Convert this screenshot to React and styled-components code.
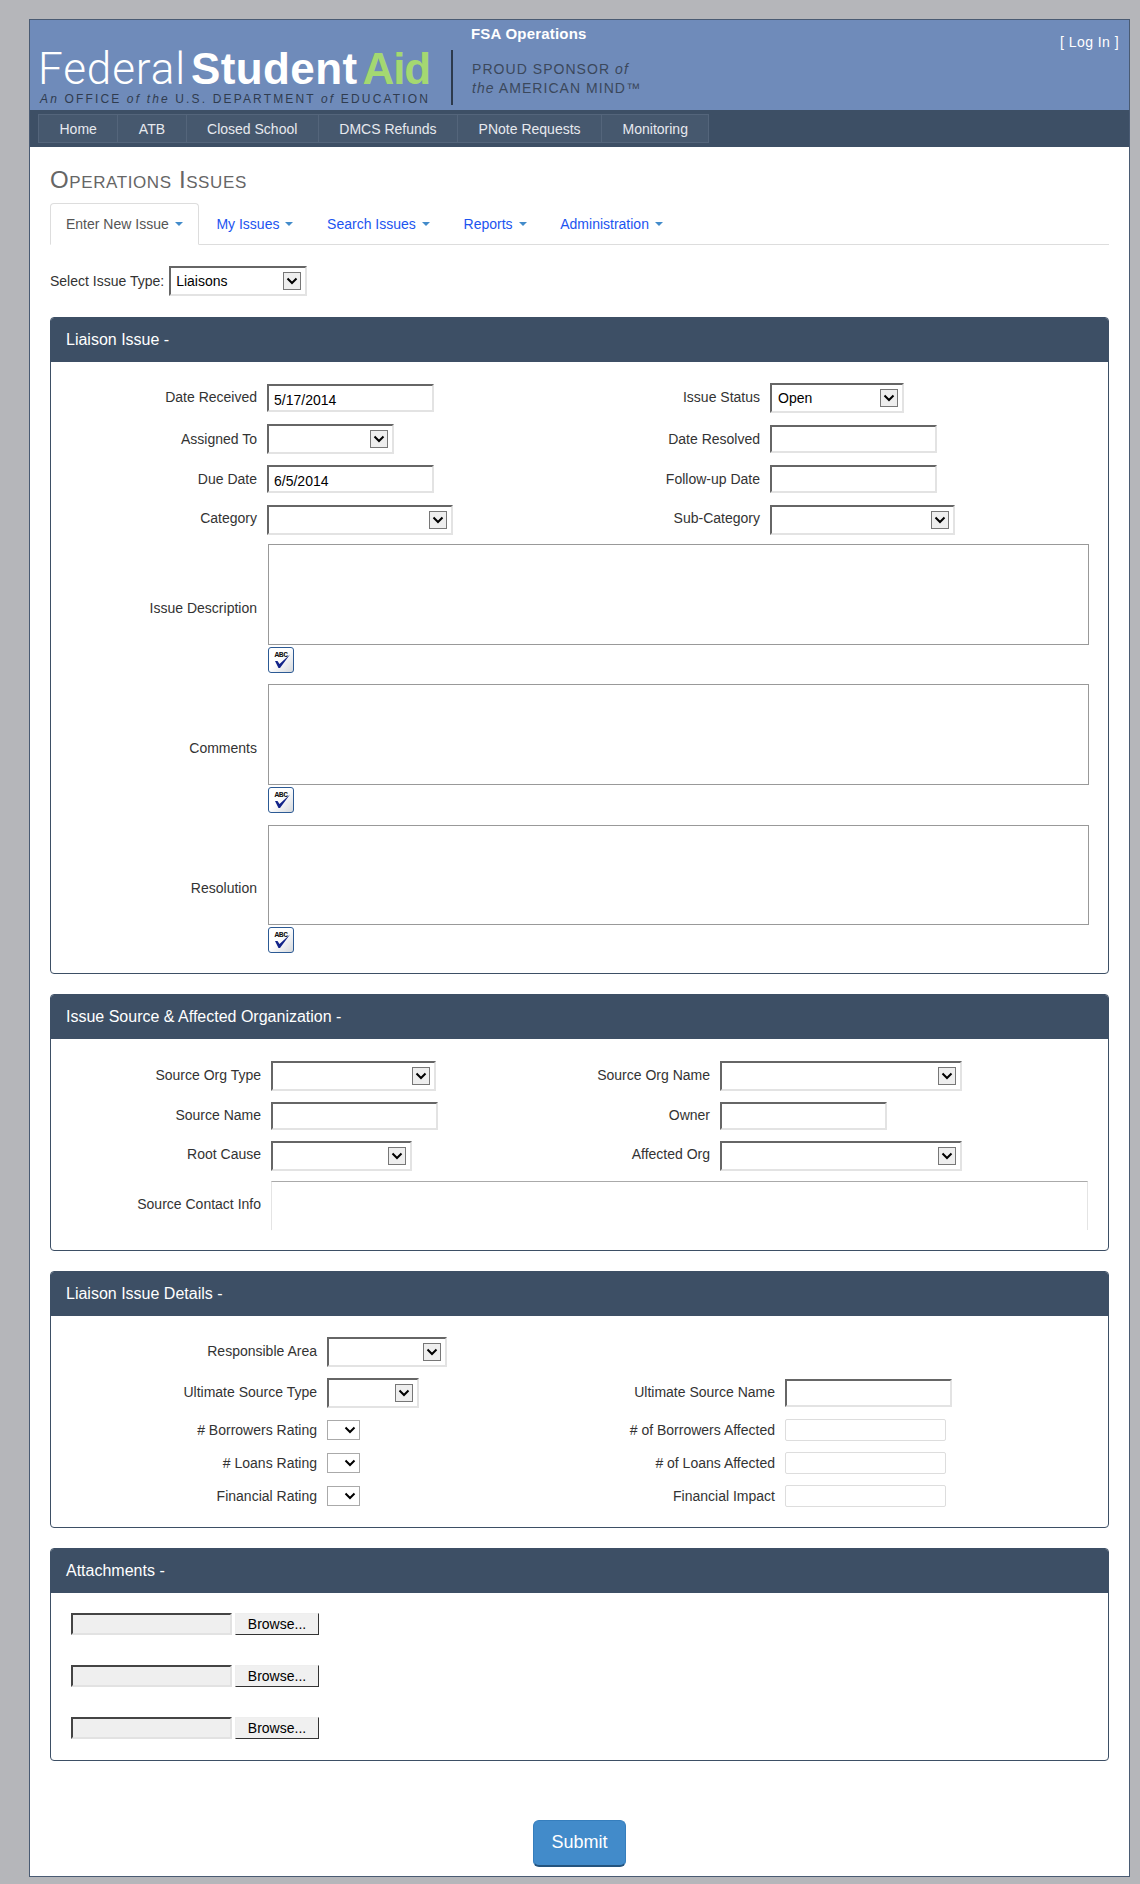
import React from "react";
import styled, { createGlobalStyle } from "styled-components";

const Global = createGlobalStyle`
  * { box-sizing: border-box; }
  html, body { margin: 0; padding: 0; }
  body {
    background: #b5b6ba;
    color: #333;
    font-family: "Liberation Sans", Arial, sans-serif;
    font-size: 14px;
    padding: 19px 0 8px 29px;
  }
`;

// ===================== Page chrome =====================
const Page = styled.div`
  width: 1101px;
  background: #fff;
  border: 1px solid #4a5b73;
`;
const Header = styled.header`
  height: 90px;
  background: #6f8bba;
  display: flex;
  padding-left: 8px;
`;
const Logo = styled.div`
  width: 413px;
  padding-top: 24px;
`;
const Wordmark = styled.div`
  display: flex;
  align-items: baseline;
  height: 50px;
  font-size: 44px;
  line-height: 50px;
  color: #fff;
`;
const Federal = styled.span`
  font-family: Roboto, "Liberation Sans", sans-serif;
  font-weight: 300;
  letter-spacing: 0.9px;
  margin-right: 5px;
`;
const Student = styled.span`
  font-weight: 700;
  letter-spacing: 0.4px;
  margin-right: 5px;
`;
const Aid = styled.span`
  font-weight: 700;
  color: #a4d871;
  letter-spacing: -1.1px;
`;
const Office = styled.div`
  margin-left: 2px;
  margin-top: -1px;
  font-size: 12px;
  line-height: 12px;
  letter-spacing: 2.15px;
  white-space: nowrap;
  color: #2f3c4f;
  em { font-style: italic; }
`;
const Divider = styled.div`
  width: 2px;
  height: 55px;
  margin: 30px 0 0 0;
  background: #2d3a4c;
`;
const Sponsor = styled.div`
  margin-left: 18px;
  padding-top: 5px;
  white-space: nowrap;
`;
const AppName = styled.div`
  font-size: 15px;
  line-height: 18px;
  letter-spacing: 0.2px;
  font-weight: 700;
  color: #fff;
`;
const Proud = styled.div`
  margin: 17px 0 0 1px;
  font-size: 14px;
  line-height: 19px;
  letter-spacing: 1.05px;
  color: #3b485c;
  em { font-style: italic; }
`;
const LogIn = styled.a`
  margin-left: auto;
  margin-right: 10px;
  padding-top: 12px;
  font-size: 14px;
  line-height: 20px;
  letter-spacing: 0.45px;
  color: #fff;
`;
const NavBar = styled.nav`
  height: 37px;
  background: #3d4f65;
  padding: 4px 0 4px 8px;
  display: flex;
`;
const NavItem = styled.a`
  display: flex;
  align-items: center;
  padding: 0 20.5px;
  background: #46586e;
  border: 1px solid #54657b;
  border-left-width: ${(p) => (p.$first ? "1px" : "0")};
  font-size: 14px;
  color: #e6e9ee;
`;

// ===================== Content =====================
const Content = styled.main`
  padding: 20px 20px 9px;
`;
const Title = styled.h1`
  margin: 0;
  height: 36px;
  font-size: 24px;
  line-height: 22px;
  padding-top: 2px;
  letter-spacing: 0.6px;
  font-weight: 400;
  font-variant: small-caps;
  color: #666;
`;
const Tabs = styled.ul`
  display: flex;
  list-style: none;
  margin: 0;
  padding: 0;
  height: 42px;
  width: 1059px;
  border-bottom: 1px solid #ddd;
`;
const Tab = styled.li`
  height: ${(p) => (p.$active ? "42px" : "41px")};
  margin-right: 1.7px;
  padding: 0 15px;
  display: flex;
  align-items: center;
  border: 1px solid ${(p) => (p.$active ? "#ddd" : "transparent")};
  border-bottom-color: ${(p) => (p.$active ? "#fff" : "transparent")};
  border-radius: 4px 4px 0 0;
  background: ${(p) => (p.$active ? "#fff" : "transparent")};
  color: ${(p) => (p.$active ? "#555" : "#1c54f0")};
`;
const Caret = styled.span`
  width: 0;
  height: 0;
  margin-left: 6px;
  border-top: 4px solid #428bca;
  border-left: 4px solid transparent;
  border-right: 4px solid transparent;
`;
const TypeRow = styled.div`
  display: flex;
  align-items: center;
  gap: 5px;
  height: 30px;
  margin: 21px 0 21px;
`;

// ===================== Panels =====================
const Panel = styled.section`
  border: 1px solid #3d4f65;
  border-radius: 4px;
  overflow: hidden;
  margin-bottom: 20px;
`;
const PanelHead = styled.h2`
  margin: 0;
  height: 44px;
  padding: 0 15px;
  display: flex;
  align-items: center;
  background: #3d4f65;
  color: #fff;
  font-size: 16px;
  font-weight: 400;
`;
const PanelBody = styled.div`
  padding: ${(p) => p.$pad || "21px 0 20px"};
`;
const Fields = styled.div`
  display: grid;
  grid-template-columns: ${(p) => p.$cols};
  grid-template-rows: ${(p) => p.$rows};
  column-gap: 10px;
  row-gap: ${(p) => p.$gap}px;
  align-items: center;
  justify-items: start;
`;
const Label = styled.label`
  justify-self: end;
  color: #333;
  white-space: nowrap;
  margin-top: ${(p) => p.$nudge ?? -3}px;
`;
const Input = styled.input`
  width: ${(p) => p.$w}px;
  height: 28px;
  padding: 3px 5px 0;
  border-style: solid;
  border-width: 2px;
  border-color: #666 #e3e3e3 #e3e3e3 #666;
  background: #fff;
  font: 14px "Liberation Sans", Arial, sans-serif;
  color: #000;
`;
const ThinInput = styled.input`
  width: ${(p) => p.$w}px;
  height: 22px;
  border: 1px solid #ddd;
  border-radius: 2px;
  background: #fff;
`;
const SelectBox = styled.div`
  width: ${(p) => p.$w}px;
  height: 30px;
  display: flex;
  align-items: center;
  justify-content: space-between;
  padding: 0 4px 0 ${(p) => p.$pad || 5}px;
  border-style: solid;
  border-width: 2px;
  border-color: #666 #e3e3e3 #e3e3e3 #666;
  background: #fff;
  color: #000;
`;
const ArrowBox = styled.span`
  width: 18px;
  height: 18px;
  display: flex;
  align-items: center;
  justify-content: center;
  background: #eee;
  border: 1px solid #777;
`;
const SmallSelect = styled.div`
  width: 33px;
  height: 20px;
  display: flex;
  align-items: center;
  justify-content: flex-end;
  padding-right: 3px;
  border: 1px solid #aaa;
  background: #fff;
`;
const TextStack = styled.div`
  margin-top: 9px;
  display: grid;
  grid-template-columns: 206px 1fr;
  column-gap: 10px;
  row-gap: 11.5px;
  align-items: center;
`;
const TextBlock = styled.div`
  padding-left: 1px;
`;
const TextArea = styled.textarea`
  display: block;
  width: 821px;
  height: ${(p) => p.$h}px;
  margin: 0 0 2px;
  border: 1px solid #999;
  background: #fff;
  resize: none;
`;
const ContactArea = styled.textarea`
  grid-column: 2 / -1;
  display: block;
  width: 817px;
  height: 49px;
  border: 1px solid #e4e4e4;
  border-top-color: #aaa;
  border-bottom: 0;
  background: #fff;
  resize: none;
`;
const SpellButton = styled.button`
  position: relative;
  display: block;
  width: 26px;
  height: 26px;
  padding: 0 0 10px;
  border: 1px solid #2c5a94;
  border-radius: 3px;
  background: linear-gradient(135deg, #fff 45%, #d5d8dc);
  font: 700 8px/8px "Liberation Mono", monospace;
  letter-spacing: -0.4px;
  color: #111;
  text-align: center;
`;
const SpellCheck = styled.svg`
  position: absolute;
  left: 0;
  top: 0;
`;
const FileList = styled.div`
  display: grid;
  row-gap: 30px;
  padding-left: 20px;
`;
const FileRow = styled.div`
  display: flex;
  gap: 3px;
`;
const FileField = styled.div`
  width: 161px;
  height: 22px;
  border-style: solid;
  border-width: 2px;
  border-color: #444 #e2e2e2 #e2e2e2 #444;
  background: #efefef;
`;
const BrowseButton = styled.button`
  width: 84px;
  height: 22px;
  padding: 0;
  border-style: solid;
  border-width: 1px;
  border-color: #eee #333 #333 #eee;
  background: #f0f0f0;
  font: 14px "Liberation Sans", Arial, sans-serif;
  color: #000;
`;
const SubmitRow = styled.div`
  display: flex;
  justify-content: center;
  margin-top: 59px;
`;
const SubmitButton = styled.button`
  width: 93px;
  height: 47px;
  border: 1px solid #357ebd;
  border-bottom: 2px solid #24547e;
  border-radius: 6px;
  background: #428bca;
  color: #fff;
  font: 18px "Liberation Sans", Arial, sans-serif;
`;

// ===================== Small parts =====================
function Chevron() {
  return (
    <svg width="12" height="8" viewBox="0 0 12 8" aria-hidden="true">
      <path d="M1.5 1.5 L6 6 L10.5 1.5" fill="none" stroke="#000" strokeWidth="2" />
    </svg>
  );
}

function Select({ w, value, pad }) {
  return (
    <SelectBox $w={w} $pad={pad}>
      <span>{value}</span>
      <ArrowBox><Chevron /></ArrowBox>
    </SelectBox>
  );
}

function Rating() {
  return <SmallSelect><Chevron /></SmallSelect>;
}

function TextField({ label, h = 101 }) {
  return (
    <>
      <Label $nudge={-1}>{label}</Label>
      <TextBlock>
        <TextArea $h={h} />
        <SpellButton>
          ABC
          <SpellCheck width="24" height="24" viewBox="0 0 24 24" aria-hidden="true">
            <path d="M6 13 L8.5 13 L10.5 16 L21 6.5 L11 20 L9.5 20 Z" fill="#12248a" />
          </SpellCheck>
        </SpellButton>
      </TextBlock>
    </>
  );
}

const NAV = ["Home", "ATB", "Closed School", "DMCS Refunds", "PNote Requests", "Monitoring"];
const TABS = ["Enter New Issue", "My Issues", "Search Issues", "Reports", "Administration"];

export default function App() {
  return (
    <Page>
      <Global />
      <Header>
        <Logo>
          <Wordmark>
            <Federal>Federal</Federal>
            <Student>Student</Student>
            <Aid>Aid</Aid>
          </Wordmark>
          <Office>
            <em>An</em> OFFICE <em>of the</em> U.S. DEPARTMENT <em>of</em> EDUCATION
          </Office>
        </Logo>
        <Divider />
        <Sponsor>
          <AppName>FSA Operations</AppName>
          <Proud>
            PROUD SPONSOR <em>of</em>
            <br />
            <em>the</em> AMERICAN MIND™
          </Proud>
        </Sponsor>
        <LogIn>[ Log In ]</LogIn>
      </Header>
      <NavBar>
        {NAV.map((n, i) => (
          <NavItem key={n} $first={i === 0}>{n}</NavItem>
        ))}
      </NavBar>

      <Content>
        <Title>Operations Issues</Title>
        <Tabs>
          {TABS.map((t, i) => (
            <Tab key={t} $active={i === 0}>{t}<Caret /></Tab>
          ))}
        </Tabs>
        <TypeRow>
          <span>Select Issue Type:</span>
          <Select w={138} value="Liaisons" />
        </TypeRow>

        <Panel>
          <PanelHead>Liaison Issue -</PanelHead>
          <PanelBody>
            <Fields $cols="206px 250px 233px 1fr" $rows="30px 30px 30px 30px" $gap={10.67}>
              <Label>Date Received</Label>
              <Input $w={167} defaultValue="5/17/2014" />
              <Label>Issue Status</Label>
              <Select w={134} value="Open" pad={6} />
              <Label $nudge={0}>Assigned To</Label>
              <Select w={127} />
              <Label $nudge={0}>Date Resolved</Label>
              <Input $w={167} />
              <Label $nudge={-1}>Due Date</Label>
              <Input $w={167} defaultValue="6/5/2014" />
              <Label $nudge={-1}>Follow-up Date</Label>
              <Input $w={167} />
              <Label>Category</Label>
              <Select w={186} />
              <Label>Sub-Category</Label>
              <Select w={185} />
            </Fields>
            <TextStack>
              <TextField label="Issue Description" />
              <TextField label="Comments" />
              <TextField label="Resolution" h={100} />
            </TextStack>
          </PanelBody>
        </Panel>

        <Panel>
          <PanelHead>Issue Source &amp; Affected Organization -</PanelHead>
          <PanelBody $pad="22px 0 20px">
            <Fields $cols="210px 250px 179px 1fr" $rows="30px 30px 30px 49px" $gap={10}>
              <Label $nudge={-2}>Source Org Type</Label>
              <Select w={165} />
              <Label $nudge={-2}>Source Org Name</Label>
              <Select w={242} />
              <Label $nudge={-2}>Source Name</Label>
              <Input $w={167} />
              <Label $nudge={-2}>Owner</Label>
              <Input $w={167} />
              <Label>Root Cause</Label>
              <Select w={141} />
              <Label>Affected Org</Label>
              <Select w={242} />
              <Label>Source Contact Info</Label>
              <ContactArea />
            </Fields>
          </PanelBody>
        </Panel>

        <Panel>
          <PanelHead>Liaison Issue Details -</PanelHead>
          <PanelBody>
            <Fields $cols="266px 250px 188px 1fr" $rows="30px 30px 22px 22px 22px" $gap={11}>
              <Label $nudge={-2}>Responsible Area</Label>
              <Select w={120} />
              <span />
              <span />
              <Label $nudge={-2}>Ultimate Source Type</Label>
              <Select w={92} />
              <Label $nudge={-2}>Ultimate Source Name</Label>
              <Input $w={167} />
              <Label $nudge={0}># Borrowers Rating</Label>
              <Rating />
              <Label $nudge={0}># of Borrowers Affected</Label>
              <ThinInput $w={161} />
              <Label $nudge={0}># Loans Rating</Label>
              <Rating />
              <Label $nudge={0}># of Loans Affected</Label>
              <ThinInput $w={161} />
              <Label $nudge={0}>Financial Rating</Label>
              <Rating />
              <Label $nudge={0}>Financial Impact</Label>
              <ThinInput $w={161} />
            </Fields>
          </PanelBody>
        </Panel>

        <Panel>
          <PanelHead>Attachments -</PanelHead>
          <PanelBody $pad="20px 0 21px">
            <FileList>
              {[0, 1, 2].map((i) => (
                <FileRow key={i}>
                  <FileField />
                  <BrowseButton>Browse...</BrowseButton>
                </FileRow>
              ))}
            </FileList>
          </PanelBody>
        </Panel>

        <SubmitRow>
          <SubmitButton>Submit</SubmitButton>
        </SubmitRow>
      </Content>
    </Page>
  );
}
